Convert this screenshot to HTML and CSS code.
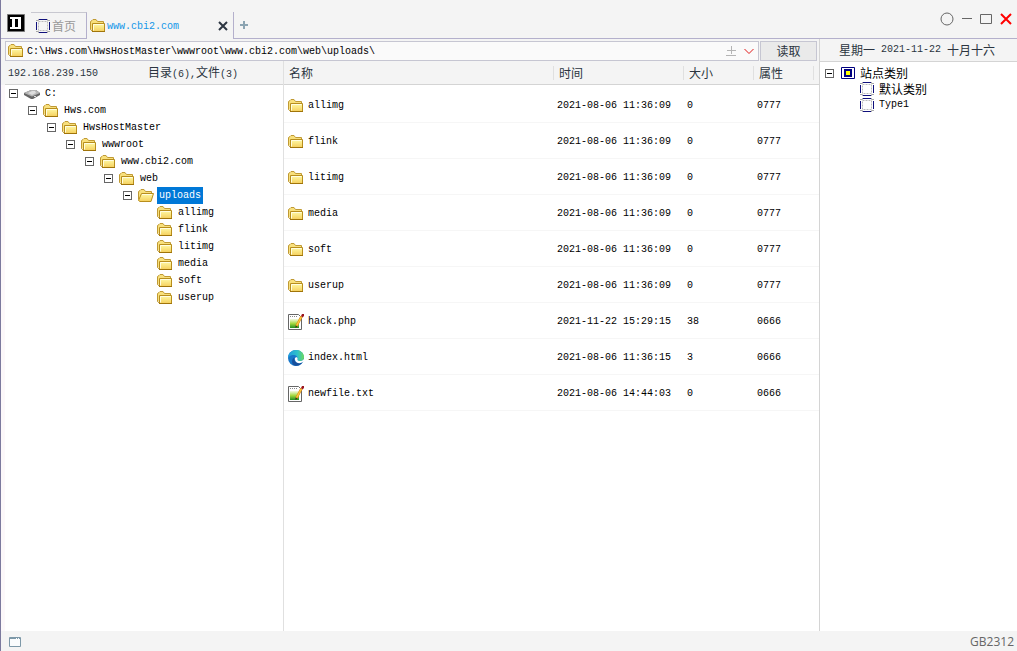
FILE: index.html
```html
<!DOCTYPE html>
<html lang="zh-CN">
<head>
<meta charset="utf-8">
<title>www.cbi2.com</title>
<link rel="stylesheet" href="styles.css">
</head>
<body>
<svg class="sprite" aria-hidden="true">
  <defs>
    <linearGradient id="gold" x1="0" y1="0" x2="0" y2="1"><stop offset="0" stop-color="#fffba8"/><stop offset="1" stop-color="#f5cf5c"/></linearGradient>
    <linearGradient id="leaf" x1="0" y1="0" x2="0" y2="1"><stop offset="0" stop-color="#f4fae0"/><stop offset=".5" stop-color="#a4d840"/><stop offset="1" stop-color="#1f8f1f"/></linearGradient>
    <linearGradient id="sea" x1="0" y1="0" x2="1" y2="0"><stop offset="0" stop-color="#1f9be0"/><stop offset=".6" stop-color="#2fc2c8"/><stop offset="1" stop-color="#6fdc58"/></linearGradient>
  </defs>
  <symbol id="folder" viewBox="0 0 16 16">
    <path d="M.5 11.500V3.500L2 2.500 3 1.500h3L7.500 3.500h6v1.500" fill="#f8e07c" stroke="#c09a34"/>
    <path d="M.5 11.500l2 1.500V5.500h12v8h-12" fill="url(#gold)" stroke="#b88e1c"/>
    <path d="M3.500 12.500v-6h10" fill="none" stroke="#fffde0"/>
    <path d="M2 13.500h13" stroke="#a0740a"/>
  </symbol>
  <symbol id="open" viewBox="0 0 16 16">
    <path d="M.5 11.500V3.500L2 2.500 3 1.500h3L7.500 3.500h6v1.500" fill="#f8e07c" stroke="#c09a34"/>
    <path d="M.5 12.500L3.500 5.500h12l-2.500 8H2z" fill="url(#gold)" stroke="#b88e1c"/>
    <path d="M4 6.500h10" stroke="#fffde0"/>
  </symbol>
  <symbol id="drive" viewBox="0 0 16 16">
    <path d="M0 7l7-3h5l4 3v2l-7 4H7L0 9z" fill="#666"/>
    <path d="M0 7l7-3h5l4 3-8 3.500z" fill="#b5b5b5"/>
    <path d="M4 7l4-2h3l1 2-4 2z" fill="#dedede"/>
    <path d="M10 10.500h2" stroke="#ddd"/>
  </symbol>
  <symbol id="note" viewBox="0 0 16 16">
    <path d="M.5 .5h10l3 3v12H.5z" fill="#fff" stroke="#666"/>
    <path d="M2 2.500h8" stroke="#888" stroke-dasharray="1 1"/>
    <path d="M2 5h9v9H2z" fill="url(#leaf)"/>
    <path d="M13.500 2.500L8.500 12" stroke="#d98a10" stroke-width="2.500"/>
    <path d="M13.500 2.500L8.700 11.500" stroke="#ffc840" stroke-width="1.400"/>
    <path d="M13 2l1-2h2v2l-1.500 1.500z" fill="#9b1620"/>
    <path d="M7.500 11.500v2.500l2-1.500z" fill="#402c18"/>
  </symbol>
  <symbol id="edge" viewBox="0 0 16 16">
    <circle cx="8" cy="8" r="8" fill="#1877c9"/>
    <path d="M0 8C0 3 4 0 8 0c5 0 8 3.500 8 7 0 3-2 4-4 4s-3-.7-2.500-2C10 6 7 4.500 4.500 5S.5 7 0 8z" fill="url(#sea)"/>
    <path d="M6.500 7.500c-1 3 1 5.500 4 5.500 2 0 3.500-.8 4.500-1.500C13 15 9.500 16.500 6.500 15.500 3.500 14.500 3 9 6.500 7.500z" fill="#164f9c"/>
    <path d="M7 8c1-1.500 3-1 2.500 1-.5 1.500 1 2 2.500 2 1.500 0 3-.5 4-2v2l-1 1c-2 1.500-5 1.500-6.500.2C7 11 6.500 9 7 8z" fill="#fff"/>
  </symbol>
  <symbol id="type" viewBox="0 0 14 14">
    <path d="M3 .5h8M3 13.500h8M.5 3v8M13.500 3v8" stroke="#10107c"/>
    <path d="M0 1.500h2.500V0M11.500 0v1.500H14M0 12.500h2.500V14M11.500 14v-1.500H14" fill="none" stroke="#aaa"/>
    <path d="M2.500 2.500h9v9h-9z" fill="none" stroke="#bbb" stroke-dasharray="2 1"/>
  </symbol>
  <symbol id="site" viewBox="0 0 14 12">
    <path d="M.5 .5h13v11H.5z" fill="#fff" stroke="#000080"/>
    <path d="M4 3h6v6H4z" fill="#ff0" stroke="#000080" stroke-width="2"/>
  </symbol>
</svg>

<div class="app">
  <header class="titlebar">
    <div class="brand">
      <svg class="logo" viewBox="0 0 18 18" role="img" aria-label="D"><path d="M.5 .5h17v17H.5z" fill="#000" stroke="#777"/><path d="M3 3h11v12H3v-2h2V5H3z" fill="#fff"/><path d="M8 5h3v8H8z" fill="#000"/></svg>
    </div>
    <button class="tab home"><svg class="i14"><use href="#type"/></svg><span class="zh">首页</span></button>
    <div class="tab active">
      <svg class="i16"><use href="#folder"/></svg><a class="site-link" href="#">www.cbi2.com</a>
      <button class="plain" aria-label="关闭标签"><svg class="i10" viewBox="0 0 10 10"><path d="M1 1l8 8M9 1L1 9" stroke="#2d3642" stroke-width="2"/></svg></button>
    </div>
    <div class="rest">
      <button class="plain" aria-label="新建标签"><svg class="i10" viewBox="0 0 10 10"><path d="M5 1v8M1 5h8" stroke="#8ca4b2" stroke-width="2"/></svg></button>
      <div class="window-buttons">
        <button class="plain" aria-label="皮肤"><svg class="i14" viewBox="0 0 14 14"><circle cx="7" cy="7" r="6" fill="none" stroke="#666"/></svg></button>
        <button class="plain" aria-label="最小化"><svg class="i10" viewBox="0 0 10 10"><path d="M0 4.500h10" stroke="#666"/></svg></button>
        <button class="plain" aria-label="最大化"><svg class="i12" viewBox="0 0 12 12"><path d="M.5 1.500h11v9H.5z" fill="none" stroke="#666"/></svg></button>
        <button class="plain" aria-label="关闭"><svg class="i12" viewBox="0 0 12 12"><path d="M1 1l10 10M11 1L1 11" stroke="#f00" stroke-width="2"/></svg></button>
      </div>
    </div>
  </header>

  <div class="body">
    <main class="browser">
      <form class="toolbar">
        <div class="pathbox">
          <svg class="i16"><use href="#folder"/></svg>
          <input class="path" aria-label="路径" value="C:\Hws.com\HwsHostMaster\wwwroot\www.cbi2.com\web\uploads\">
          <button type="button" class="plain" aria-label="收藏"><svg class="i10" viewBox="0 0 10 10"><path d="M5.500 0v8M1 4.500h9M0 9.500h10" stroke="#b4b4b4"/></svg></button>
          <button type="button" class="plain" aria-label="展开"><svg class="i10" viewBox="0 0 10 10"><path d="M.5 3L5 7.500 9.500 3" fill="none" stroke="#e01818"/></svg></button>
        </div>
        <button type="button" class="read zh">读取</button>
      </form>
      <div class="panes">
        <section class="tree-pane">
          <div class="summary"><span>192.168.239.150</span><span><span class="zh">目录</span>(6),<span class="zh">文件</span>(3)</span></div>
          <ul class="tree">
            <li><div class="node"><button class="toggle" aria-label="折叠"></button><svg class="i16"><use href="#drive"/></svg><span class="label">C:</span></div>
            <ul><li><div class="node"><button class="toggle" aria-label="折叠"></button><svg class="i16"><use href="#folder"/></svg><span class="label">Hws.com</span></div>
            <ul><li><div class="node"><button class="toggle" aria-label="折叠"></button><svg class="i16"><use href="#folder"/></svg><span class="label">HwsHostMaster</span></div>
            <ul><li><div class="node"><button class="toggle" aria-label="折叠"></button><svg class="i16"><use href="#folder"/></svg><span class="label">wwwroot</span></div>
            <ul><li><div class="node"><button class="toggle" aria-label="折叠"></button><svg class="i16"><use href="#folder"/></svg><span class="label">www.cbi2.com</span></div>
            <ul><li><div class="node"><button class="toggle" aria-label="折叠"></button><svg class="i16"><use href="#folder"/></svg><span class="label">web</span></div>
            <ul><li><div class="node"><button class="toggle" aria-label="折叠"></button><svg class="i16"><use href="#open"/></svg><span class="label selected">uploads</span></div>
              <ul class="leaves">
                <li class="node"><svg class="i16"><use href="#folder"/></svg><span class="label">allimg</span></li>
                <li class="node"><svg class="i16"><use href="#folder"/></svg><span class="label">flink</span></li>
                <li class="node"><svg class="i16"><use href="#folder"/></svg><span class="label">litimg</span></li>
                <li class="node"><svg class="i16"><use href="#folder"/></svg><span class="label">media</span></li>
                <li class="node"><svg class="i16"><use href="#folder"/></svg><span class="label">soft</span></li>
                <li class="node"><svg class="i16"><use href="#folder"/></svg><span class="label">userup</span></li>
              </ul>
            </li></ul></li></ul></li></ul></li></ul></li></ul></li></ul></li>
          </ul>
        </section>
        <section class="list-pane">
          <table class="files">
            <colgroup><col><col class="c-time"><col class="c-size"><col class="c-attr"><col class="c-end"></colgroup>
            <thead><tr><th><span>名称</span></th><th><span>时间</span></th><th><span>大小</span></th><th><span>属性</span></th><th><span></span></th></tr></thead>
            <tbody>
              <tr><td><div class="file"><svg class="i16"><use href="#folder"/></svg>allimg</div></td><td>2021-08-06 11:36:09</td><td>0</td><td>0777</td><td></td></tr>
              <tr><td><div class="file"><svg class="i16"><use href="#folder"/></svg>flink</div></td><td>2021-08-06 11:36:09</td><td>0</td><td>0777</td><td></td></tr>
              <tr><td><div class="file"><svg class="i16"><use href="#folder"/></svg>litimg</div></td><td>2021-08-06 11:36:09</td><td>0</td><td>0777</td><td></td></tr>
              <tr><td><div class="file"><svg class="i16"><use href="#folder"/></svg>media</div></td><td>2021-08-06 11:36:09</td><td>0</td><td>0777</td><td></td></tr>
              <tr><td><div class="file"><svg class="i16"><use href="#folder"/></svg>soft</div></td><td>2021-08-06 11:36:09</td><td>0</td><td>0777</td><td></td></tr>
              <tr><td><div class="file"><svg class="i16"><use href="#folder"/></svg>userup</div></td><td>2021-08-06 11:36:09</td><td>0</td><td>0777</td><td></td></tr>
              <tr><td><div class="file"><svg class="i16"><use href="#note"/></svg>hack.php</div></td><td>2021-11-22 15:29:15</td><td>38</td><td>0666</td><td></td></tr>
              <tr><td><div class="file"><svg class="i16"><use href="#edge"/></svg>index.html</div></td><td>2021-08-06 11:36:15</td><td>3</td><td>0666</td><td></td></tr>
              <tr><td><div class="file"><svg class="i16"><use href="#note"/></svg>newfile.txt</div></td><td>2021-08-06 14:44:03</td><td>0</td><td>0666</td><td></td></tr>
            </tbody>
          </table>
        </section>
      </div>
    </main>

    <aside class="side">
      <div class="date"><span class="zh">星期一</span><span>2021-11-22</span><span class="zh">十月十六</span></div>
      <ul class="sites">
        <li><div class="node"><button class="toggle" aria-label="折叠"></button><svg class="site-icon"><use href="#site"/></svg><span class="label zh">站点类别</span></div>
          <ul>
            <li class="node"><svg class="i14"><use href="#type"/></svg><span class="label zh">默认类别</span></li>
            <li class="node"><svg class="i14"><use href="#type"/></svg><span class="label">Type1</span></li>
          </ul>
        </li>
      </ul>
    </aside>
  </div>

  <footer class="status">
    <svg class="i12" viewBox="0 0 12 12"><path d="M.5 1.500h11v9H.5z" fill="#fafcfd" stroke="#7d98a8"/><path d="M1 2.500h10" stroke="#7d98a8" stroke-dasharray="6 1 1 1"/></svg>
    <span>GB2312</span>
  </footer>
</div>
</body>
</html>
```
FILE: styles.css
```css
* { box-sizing: border-box; }

body {
  margin: 0;
  background: #f4f4f4;
  color: #000;
  font: 10px/16px "Liberation Mono", "Noto Sans CJK SC", monospace;
}

button, input { font: inherit; color: inherit; margin: 0; }
ul { list-style: none; margin: 0; padding: 0; }
svg { display: block; flex: none; }

.sprite { position: absolute; width: 0; height: 0; }
.i10 { width: 10px; height: 10px; }
.i12 { width: 12px; height: 12px; }
.i14 { width: 14px; height: 14px; }
.i16 { width: 16px; height: 16px; }
.site-icon { width: 14px; height: 12px; margin-left: 1px; }
.zh { font-family: "Noto Sans CJK SC", sans-serif; font-size: 12px; }

.app {
  display: flex;
  flex-direction: column;
  min-height: 100vh;
  border-left: 1px solid #7c7a9e;
}

.plain { display: flex; padding: 0; border: 0; background: none; }

/* title bar */
.titlebar { display: flex; padding-top: 12px; }
.brand { padding: 2px 6px 6px; border-bottom: 1px solid #b4b0cc; }
.logo { width: 18px; height: 18px; }
.tab { display: flex; align-items: center; height: 27px; border: 0 solid #b4b0cc; border-right-width: 1px; background: none; }
.home {
  gap: 2px;
  width: 56px;
  padding: 0 0 0 5px;
  border-top: 1px solid #c8c8d0;
  border-bottom-width: 1px;
  color: #999;
}
.active { gap: 1px; width: 147px; padding: 0 5px 0 3px; }
.site-link { flex: 1; padding-top: 2px; color: #1296e8; text-decoration: none; }
.rest { flex: 1; display: flex; align-items: center; justify-content: space-between; padding-left: 5px; border-bottom: 1px solid #b4b0cc; }
.window-buttons { display: flex; align-items: center; align-self: flex-start; gap: 8px; padding-right: 5px; }

/* columns */
.body { flex: 1; display: flex; padding-left: 4px; }
.browser { flex: 1; display: flex; flex-direction: column; min-width: 0; }
.toolbar { display: flex; gap: 1px; padding: 2px 2px 0 0; }
.pathbox {
  flex: 1;
  display: flex;
  align-items: center;
  gap: 8px;
  height: 20px;
  padding: 0 4px 0 2px;
  border: 1px solid #c6c6d2;
  background: #fafafa;
}
.path { flex: 1; min-width: 0; padding: 2px 0 0; border: 0; margin-left: -5px; background: none; outline: 0; }
.read { width: 57px; padding: 0; border: 1px solid #c6c6d2; background: #eaeaea; line-height: 16px; color: #2b3440; }

.panes { flex: 1; display: flex; }
.tree-pane { display: flex; flex-direction: column; width: 278px; }
.summary {
  display: flex;
  align-items: center;
  gap: 50px;
  height: 24px;
  padding: 2px 0 0 3px;
  border-bottom: 1px solid #d4d4d4;
  color: #2b3440;
}
.tree { flex: 1; margin-left: -4px; padding-left: 4px; border-left: 4px solid #fcf8fa; background: #fff; }
.tree ul { padding-left: 19px; }
.node { display: flex; align-items: center; height: 17px; }
.toggle {
  width: 9px;
  height: 9px;
  margin-right: 6px;
  padding: 0;
  border: 1px solid #666;
  background: linear-gradient(#000, #000) center / 5px 1px no-repeat #fff;
}
.label { padding: 0 2px; margin-left: 3px; line-height: 17px; }
.selected { background: #0078d7; color: #fff; }
.tree .leaves { padding-left: 34px; }

.list-pane { flex: 1; min-width: 0; border-left: 1px solid #e0e0e0; background: #fff; }
.files { width: 100%; table-layout: fixed; border-collapse: separate; border-spacing: 0; }
.c-time { width: 130px; }
.c-size { width: 70px; }
.c-attr { width: 60px; }
.c-end { width: 6px; }
.files th {
  height: 24px;
  padding: 0;
  border-bottom: 1px solid #d4d4d4;
  background: #f4f4f4;
  color: #2b3440;
  font: 12px/14px "Noto Sans CJK SC", sans-serif;
  text-align: left;
}
.files th span { display: block; height: 14px; padding-left: 5px; border-left: 1px solid #e0e0e0; }
.files th:first-child span { border-left: 0; }
.files td { height: 36px; padding: 2px 4px 0; border-bottom: 1px solid #f6f6f6; white-space: nowrap; }
.files td:last-child { padding: 0; }
.files tbody tr:first-child td { height: 38px; padding-top: 4px; }
.file { display: flex; align-items: center; gap: 4px; }

/* right column */
.side { display: flex; flex-direction: column; width: 198px; border-left: 1px solid #d4d4d4; }
.date { display: flex; align-items: center; gap: 6px; height: 23px; padding-left: 19px; border-bottom: 1px solid #d4d4d4; color: #2b3440; }
.sites { flex: 1; padding: 3px 0 0 5px; background: #fff; }
.sites .node { height: 16px; }
.sites .label { line-height: 16px; }
.sites ul { padding-left: 35px; }

.status {
  display: flex;
  align-items: center;
  justify-content: space-between;
  height: 20px;
  padding: 2px 3px 0 8px;
  color: #666;
  font: 12px/16px "Open Sans", sans-serif;
}
```
